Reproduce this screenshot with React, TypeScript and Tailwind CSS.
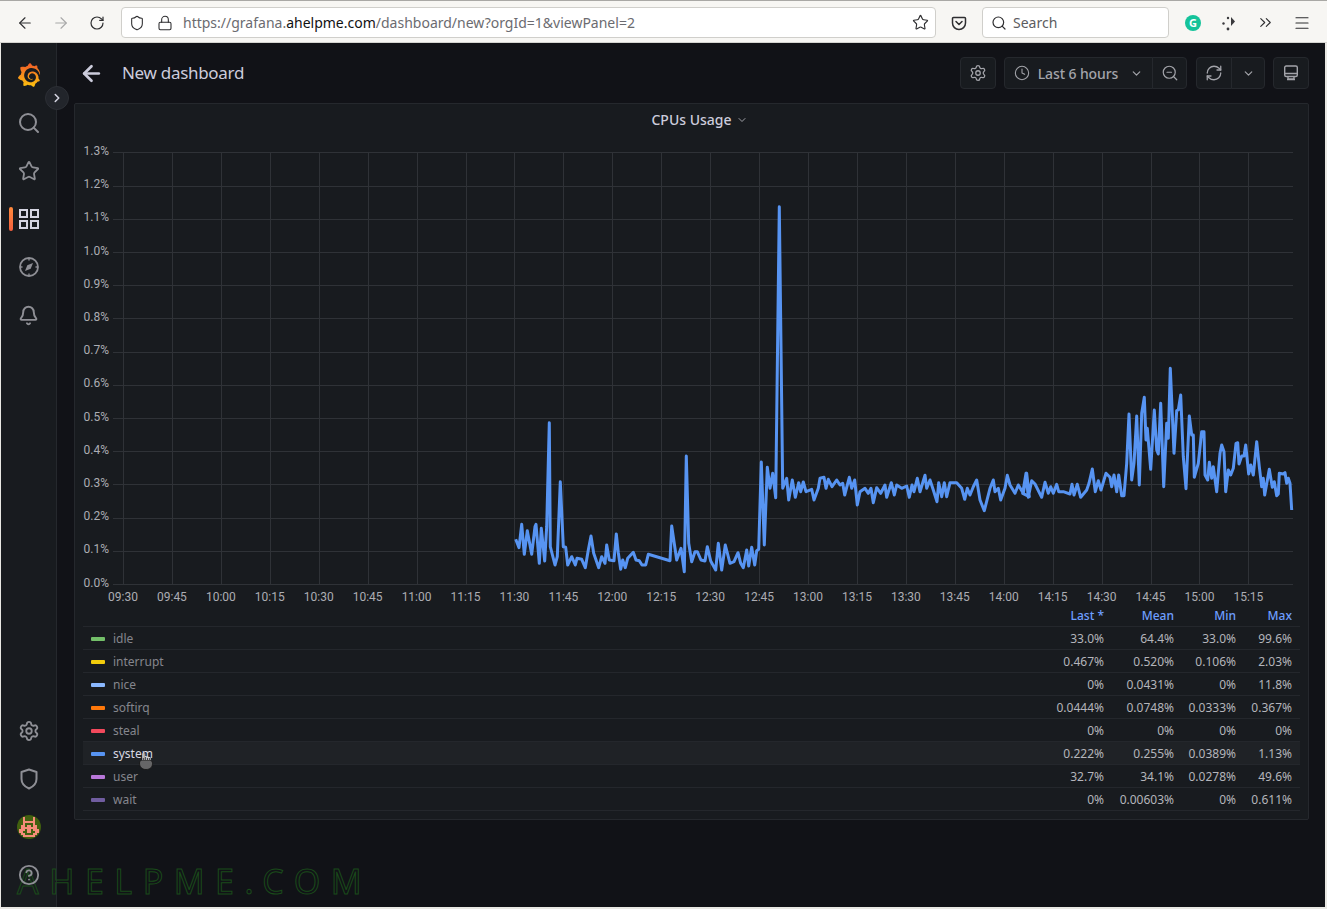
import React from "react";
import {
  ArrowLeft, ArrowRight, RotateCw, Shield, Lock, Star, Search, ChevronsRight, Menu,
  Bell, Settings, CircleHelp, ChevronRight, ChevronDown, Clock, ZoomOut, RefreshCw,
} from "lucide-react";
import { SiGrafana } from "react-icons/si";

const z3 = [47,418,57,443,65,373,73,463,82,392,95,463,105,380,108,373,118,490,124,385,134,483,140,380,148,68,151,440,165,495,172,470,181,245,190,440,197,442,203,495,215,470,226,495,231,475,245,478,256,503,265,450,273,408,281,460,296,503,305,470,315,490,320,435,328,480,342,482,349,402,355,458,362,508,368,480,376,503,383,475,400,457,408,480,418,482,426,495,437,495,445,463,510,482,515,378,530,480,543,445,553,515,559,168,566,430,575,485,585,455,592,455,603,480,615,483,622,440,632,483,647,510,655,430,665,510,676,435,690,490,702,485,714,458,722,490,730,503,740,450,746,498,755,442,764,495,770,452,776,448,784,186,793,435,802,202,810,265,818,220,827,293];
const z4 = [58,50,68,895,80,865,86,930,97,870,106,922,116,878,122,905,130,876,138,905,155,898,162,930,175,895,180,865,192,862,198,895,205,868,216,890,230,870,240,885,248,880,254,915,268,862,275,895,284,870,292,945,300,905,315,895,325,910,333,895,340,938,350,893,362,910,375,885,380,922,394,878,403,915,410,885,425,895,440,888,448,922,456,885,462,905,472,865,480,905,495,856,500,895,510,870,520,900,531,935,536,878,545,920,553,878,560,920,570,878,590,878,605,895,614,928,622,895,630,915,640,890,650,870,660,930,673,962,690,895,700,870,705,905,715,895,722,930,735,895,742,856,750,885,765,910,775,885,790,910,800,850,808,920];
const z5 = [8,430,18,370,25,442,35,392,45,402,65,442,75,397,85,430,92,410,100,430,110,403,116,425,130,425,150,432,156,403,162,435,172,403,182,442,200,420,207,400,217,357,226,425,235,392,243,420,258,370,270,382,275,410,282,375,290,425,296,375,305,437,312,437,320,340,327,192,335,390,342,340,350,198,358,405,365,190,373,142,378,270,382,235,392,358,403,180,410,300,415,312,422,160,431,410,440,220,445,265,451,55,462,310,470,182,475,180,482,135,490,320,498,416,508,198,515,255,520,255,523,382,535,340,545,245,552,245,555,375,563,390,568,337,575,385,580,350,590,425,600,310,605,285,612,305,617,425,625,360,632,375,640,355,648,280,653,278,657,342,665,318,672,318,677,285,686,372,692,345,700,375,710,275,718,350,725,410,730,385,734,435,748,358,757,412,763,395,770,437,775,432,778,370,790,372,795,368,800,400,805,385,810,400,815,480];

function toAbs(arr: number[], ox: number, oy: number) {
  const out: string[] = [];
  for (let i = 0; i < arr.length; i += 2) out.push(`${(ox + arr[i] / 3).toFixed(1)},${(oy + arr[i + 1] / 3).toFixed(1)}`);
  return out;
}
const linePoints = [...toAbs(z3, 500, 400), ...toAbs(z4, 760, 190), ...toAbs(z5, 1020, 350)].join(" ");

const times = ["09:30","09:45","10:00","10:15","10:30","10:45","11:00","11:15","11:30","11:45","12:00","12:15","12:30","12:45","13:00","13:15","13:30","13:45","14:00","14:15","14:30","14:45","15:00","15:15"];
const yLabels = ["0.0%","0.1%","0.2%","0.3%","0.4%","0.5%","0.6%","0.7%","0.8%","0.9%","1.0%","1.1%","1.2%","1.3%"];

const rows = [
  { n: "idle", c: "bg-[#73bf69]", v: ["33.0%", "64.4%", "33.0%", "99.6%"] },
  { n: "interrupt", c: "bg-[#f2cc0c]", v: ["0.467%", "0.520%", "0.106%", "2.03%"] },
  { n: "nice", c: "bg-[#8ab8ff]", v: ["0%", "0.0431%", "0%", "11.8%"] },
  { n: "softirq", c: "bg-[#ff780a]", v: ["0.0444%", "0.0748%", "0.0333%", "0.367%"] },
  { n: "steal", c: "bg-[#f2495c]", v: ["0%", "0%", "0%", "0%"] },
  { n: "system", c: "bg-[#5794f2]", v: ["0.222%", "0.255%", "0.0389%", "1.13%"], hover: true },
  { n: "user", c: "bg-[#b877d9]", v: ["32.7%", "34.1%", "0.0278%", "49.6%"] },
  { n: "wait", c: "bg-[#705da0]", v: ["0%", "0.00603%", "0%", "0.611%"] },
];

const avatarPixels = [
  "..#....#..",
  "..#....#..",
  "..######..",
  "..#....#..",
  ".##.##.##.",
  ".########.",
  "###.##.###",
  "##..##..##",
  ".##....##.",
  "..######..",
];

function Chart() {
  return (
    <svg viewBox="75 134 1233 472" className="block w-[1233px] h-[472px]" fontFamily="Roboto, sans-serif" fontSize="12">
      {yLabels.map((l, i) => {
        const raw = 584 - i * 33.2;
        const y = Math.round(raw) + 0.5;
        return (
          <g key={l}>
            <line x1="113" x2="1293" y1={y} y2={y} stroke="#2f3237" strokeWidth="1" />
            <text x="109" y={raw + 2.5} textAnchor="end" fill="#acadb3">{l}</text>
          </g>
        );
      })}
      {times.map((t, i) => {
        const raw = 123 + i * 48.93;
        const x = Math.round(raw) + 0.5;
        return (
          <g key={t}>
            <line x1={x} x2={x} y1="152" y2="584" stroke="#2f3237" strokeWidth="1" />
            <text x={raw} y="601" textAnchor="middle" fill="#acadb3">{t}</text>
          </g>
        );
      })}
      <polyline points={linePoints} fill="none" stroke="#5794f2" strokeWidth="3" strokeLinejoin="round" />
    </svg>
  );
}

function SideItem({ children, active }: { children: React.ReactNode; active?: boolean }) {
  return (
    <div className="relative z-10 h-12 flex items-center justify-center text-[#8e8f95]">
      {active && <div className="absolute left-[8px] top-3 w-[4px] h-6 rounded-sm bg-gradient-to-b from-[#ff8a3c] to-[#f55f3e]" />}
      {children}
    </div>
  );
}

function ToolBtn({ children, className = "" }: { children: React.ReactNode; className?: string }) {
  return (
    <div className={`h-8 flex items-center justify-center bg-[#181b1f] border border-[#25282d] text-[#a3a4aa] rounded-sm ${className}`}>
      {children}
    </div>
  );
}

export default function App() {
  return (
    <div className="relative w-[1327px] h-[909px] overflow-hidden bg-[#e9e8e4] pl-px pr-[2px] pb-[2px] flex flex-col">
      {/* Browser toolbar */}
      <div className="-ml-px -mr-[2px] h-[43px] shrink-0 bg-[#f7f6f3] border-t border-[#a9a8a5] border-b border-b-[#d5d4d0] pt-[2px] flex items-center text-[#2e2e30] font-['Noto_Sans',sans-serif]">
        <ArrowLeft size={18} strokeWidth={1.5} className="ml-[16px]" />
        <ArrowRight size={18} strokeWidth={1.5} className="ml-[18px] text-[#a8a8a8]" />
        <RotateCw size={16} strokeWidth={1.8} className="ml-[19px]" />
        <div className="ml-[16px] w-[815px] h-[31px] bg-white border border-[#d0cfcb] rounded-[4px] flex items-center">
          <Shield size={16} strokeWidth={1.6} className="ml-[7px]" />
          <Lock size={16} strokeWidth={1.6} className="ml-[12px]" />
          <span className="ml-[10px] -mt-px text-[14px] text-[#6b6b70] whitespace-nowrap">
            https://grafana.<span className="text-[#111]">ahelpme.com</span>/dashboard/new?orgId=1&amp;viewPanel=2
          </span>
          <Star size={17} strokeWidth={1.6} className="ml-auto mr-[6px]" />
        </div>
        <svg viewBox="0 0 16 16" className="ml-[15px] w-4 h-4" fill="none" stroke="currentColor" strokeWidth="1.5">
          <path d="M2.500 2.500h11a1 1 0 0 1 1 1V8a6.500 6.500 0 0 1-13 0V3.500a1 1 0 0 1 1-1z" />
          <path d="M5 6.500l3 3 3-3" strokeLinecap="round" strokeLinejoin="round" />
        </svg>
        <div className="ml-[15px] w-[187px] h-[31px] bg-white border border-[#d0cfcb] rounded-[4px] flex items-center">
          <Search size={16} strokeWidth={1.8} className="ml-[8px]" />
          <span className="ml-[6px] -mt-px text-[14px] text-[#5c5c60]">Search</span>
        </div>
        <div className="ml-[16px] w-4 h-4 rounded-full bg-[#15c39a] flex items-center justify-center text-white text-[11px] font-bold leading-none">G</div>
        <svg viewBox="0 0 16 16" className="ml-[20px] w-4 h-4" fill="#3a3a3d">
          <circle cx="2.500" cy="8.500" r="1.200" />
          <circle cx="7" cy="3" r="1.200" />
          <circle cx="7" cy="14" r="1.400" />
          <path d="M10 2l4 4.500L10 11z" />
        </svg>
        <ChevronsRight size={19} strokeWidth={1.4} className="ml-[19px]" />
        <Menu size={18} strokeWidth={1.6} className="ml-[18px]" />
      </div>

      {/* Main */}
      <div className="flex-1 flex min-h-0 bg-[#111217] font-['Roboto',sans-serif]">
        <div className="w-[56px] shrink-0 bg-[#181b1f] border-r border-[#25282d] flex flex-col py-2">
          <SideItem>
            <svg width="0" height="0" className="absolute">
              <defs>
                <linearGradient id="grafanaGrad" x1="0" y1="1" x2="0" y2="0">
                  <stop offset="0" stopColor="#fcc30f" />
                  <stop offset="1" stopColor="#f05a28" />
                </linearGradient>
              </defs>
            </svg>
            <SiGrafana size={24} fill="url(#grafanaGrad)" stroke="none" />
          </SideItem>
          <SideItem><Search size={24} strokeWidth={2} /></SideItem>
          <SideItem><Star size={22} strokeWidth={2} /></SideItem>
          <SideItem active>
            <svg viewBox="0 0 22 22" className="w-[22px] h-[22px]" fill="none" stroke="#d5d5e2" strokeWidth="2">
              <rect x="2" y="2" width="7" height="7" />
              <rect x="13" y="2" width="7" height="7" />
              <rect x="2" y="13" width="7" height="7" />
              <rect x="13" y="13" width="7" height="7" />
            </svg>
          </SideItem>
          <SideItem>
            <svg viewBox="0 0 22 22" className="w-[22px] h-[22px]" fill="none" stroke="currentColor" strokeWidth="1.800">
              <circle cx="11" cy="11" r="9" />
              <path d="M11 2v2.500M11 17.500V20M2 11h2.500M17.500 11H20" strokeWidth="1.400" />
              <path d="M15 7l-2.300 5.700L7 15l2.300-5.700z" fill="currentColor" stroke="none" />
            </svg>
          </SideItem>
          <SideItem><Bell size={21} strokeWidth={2.2} /></SideItem>
          <div className="mt-auto" />
          <SideItem><Settings size={22} strokeWidth={2} /></SideItem>
          <SideItem>
            <svg viewBox="0 0 18 22" className="w-[18px] h-[22px]" fill="none" stroke="currentColor" strokeWidth="2" strokeLinejoin="round">
              <path d="M9 1.500L16.500 4v7c0 4.500-3 7.500-7.500 9.500C4.500 18.500 1.500 15.500 1.500 11V4z" />
            </svg>
          </SideItem>
          <SideItem>
            <svg viewBox="0 0 24 24" className="w-6 h-6">
              <clipPath id="avatarClip"><circle cx="12" cy="12" r="12" /></clipPath>
              <g clipPath="url(#avatarClip)">
                <rect width="24" height="24" fill="#41600f" />
                {avatarPixels.map((r, y) =>
                  r.split("").map((c, x) =>
                    c === "#" ? <rect key={`${x}-${y}`} x={2 + x * 2} y={2 + y * 2} width="2" height="2" fill="#f58c7a" /> : null
                  )
                )}
              </g>
            </svg>
          </SideItem>
          <SideItem><CircleHelp size={22} strokeWidth={2} /></SideItem>
        </div>

        <div className="flex-1 min-w-0 pl-[17px] pr-[16px] flex flex-col">
          <div className="h-[60px] shrink-0 flex items-center">
            <ArrowLeft size={25} strokeWidth={2.6} className="ml-[5px] text-[#ccccdc]" />
            <span className="ml-[18px] text-[17px] tracking-[-0.3px] text-[#ccccdc]">New dashboard</span>
            <div className="ml-auto flex items-center">
              <ToolBtn className="w-9"><Settings size={18} strokeWidth={1.7} /></ToolBtn>
              <ToolBtn className="ml-2 w-[149px] rounded-r-none text-[14px]">
                <Clock size={16} strokeWidth={1.6} />
                <span className="ml-2 tracking-[-0.1px] font-medium">Last 6 hours</span>
                <ChevronDown size={13} strokeWidth={2.2} className="ml-3" />
              </ToolBtn>
              <ToolBtn className="w-[35px] -ml-px rounded-l-none"><ZoomOut size={18} strokeWidth={1.6} /></ToolBtn>
              <ToolBtn className="ml-[9px] w-[36px] rounded-r-none"><RefreshCw size={18} strokeWidth={1.7} /></ToolBtn>
              <ToolBtn className="w-[34px] -ml-px rounded-l-none"><ChevronDown size={13} strokeWidth={2.2} /></ToolBtn>
              <ToolBtn className="ml-2 w-9">
                <svg viewBox="0 0 16 16" className="w-4 h-4" fill="none" stroke="currentColor" strokeWidth="1.400" strokeLinejoin="round">
                  <rect x="1.700" y="1" width="12.600" height="10.500" rx="1.500" />
                  <path d="M1.700 8.500h12.600M5 11.500v2.500h6v-2.500M4 14.500h8" />
                </svg>
              </ToolBtn>
            </div>
          </div>

          <div className="h-[717px] bg-[#181b1f] border border-[#25282d] rounded-[2px]">
            <div className="h-[30px] pl-[16px] flex items-center justify-center text-[14px] font-medium text-[#ccccdc]">
              CPUs Usage
              <ChevronDown size={12} strokeWidth={2} className="ml-[4px] mt-px text-[#9fa0a6]" />
            </div>
            <Chart />
            <div className="mx-2 text-[12px]">
              <div className="h-[21px] grid grid-cols-[1fr_70px_70px_62px_56px] pr-2 items-center border-b border-[#24272c] text-right font-medium text-[#6e9fff]">
                <div />
                <div>Last *</div>
                <div>Mean</div>
                <div>Min</div>
                <div>Max</div>
              </div>
              {rows.map((r) => (
                <div
                  key={r.n}
                  className={`h-[23px] pt-px grid grid-cols-[1fr_70px_70px_62px_56px] pr-2 items-center border-b border-[#24272c] text-[#b4b5bb] text-right ${r.hover ? "bg-[#1f2226]" : ""}`}
                >
                  <div className="flex items-center text-left pl-2">
                    <div className={`w-[14px] h-[4px] rounded-[1px] ${r.c}`} />
                    <span className={`ml-2 ${r.hover ? "text-[#d8d9e3]" : "text-[#85868d]"}`}>{r.n}</span>
                  </div>
                  <div>{r.v[0]}</div>
                  <div>{r.v[1]}</div>
                  <div>{r.v[2]}</div>
                  <div>{r.v[3]}</div>
                </div>
              ))}
            </div>
          </div>
        </div>
      </div>

      {/* Sidebar toggle */}
      <div className="absolute z-20 left-[45px] top-[86px] w-6 h-6 rounded-full bg-[#22252b] border border-[#2c2f35] flex items-center justify-center text-[#d5d5e2]">
        <ChevronRight size={14} strokeWidth={2.6} />
      </div>

      {/* Mouse cursor */}
      <svg viewBox="0 0 16 18" className="absolute z-20 left-[138px] top-[752px] w-4 h-[18px]">
        <path d="M1.500 11c0-2 1.500-3 3-3h7c2 0 3 1.500 3 3.500 0 3.500-2 6-6.500 6S1.500 14.500 1.500 11z" fill="#666667" stroke="#161616" strokeWidth="0.9" />
        <path d="M4.800 8V1.300M6.800 8V1.300M6.800 4.500h1.800V8M8.600 5h1.800v3M10.400 5.500h1.800V8" fill="none" stroke="#dcdce0" strokeWidth="0.9" />
      </svg>

      {/* Watermark */}
      <div className="absolute z-0 left-[17px] top-[861px] text-[34px] leading-[40px] tracking-[10.500px] whitespace-nowrap font-['Liberation_Sans',sans-serif] text-transparent [-webkit-text-stroke:1px_#1a4a1a]">
        AHELPME.COM
      </div>
    </div>
  );
}
